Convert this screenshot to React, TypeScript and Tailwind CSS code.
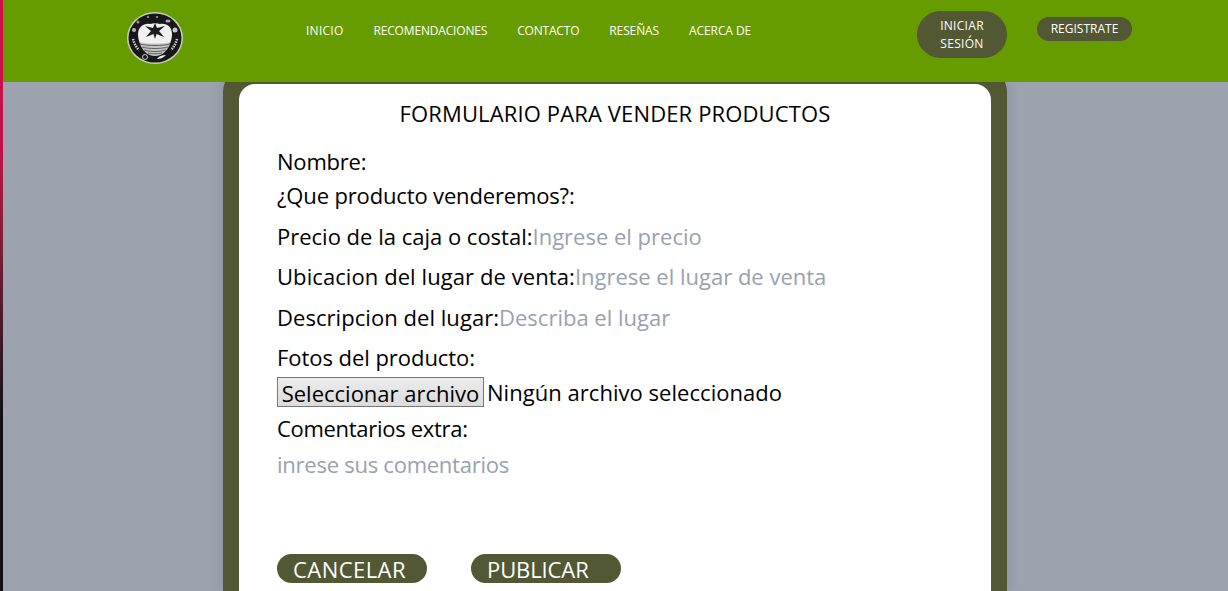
// Formulario para vender productos
function Logo() {
  return (
    <svg viewBox="0 0 56 52" className="h-[52px] w-[56px] shrink-0">
      <ellipse cx="28" cy="26" rx="28" ry="26" fill="#c9cec0" />
      <ellipse cx="28" cy="26" rx="26.5" ry="24.5" fill="#17171a" />
      <path d="M11 22c0-7 6-11 12-10 3-1 7-1 10 0 7-1 12 3 12 10 0 10-7 21-17 21S11 32 11 22z" fill="#f0f0f0" />
      <path d="M12.5 30c6 2 25 2 31 0-2 8-8 14-15.500 14S14.500 38 12.500 30z" fill="#c4c4c4" />
      <path d="M13 32c7 2 23 2 30 0M15 35c6 2 20 2 26 0M17 38c6 2 16 2 22 0M21 41c4 1 10 1 14 0" stroke="#444" strokeWidth="0.8" fill="none" />
      <path d="M28 11L30 16L38 14L32 19L37 25L29.500 22L28 27L26.500 22L19 25L24 19L18 14L26 16Z" fill="#1c1c1c" />
      <g fill="none" stroke="#cfcfcf" strokeWidth="2.500" strokeDasharray="1.500 1">
        <path d="M6 27c1 4 3 8 6 11" />
        <path d="M50 27c-1 4-3 8-6 11" />
      </g>
      <circle cx="7" cy="18" r="2" fill="#b5b5b5" />
      <circle cx="48" cy="18" r="2.500" fill="#c5c5c5" />
      <circle cx="18" cy="45" r="2.500" fill="none" stroke="#ccc" />
      <path d="M30 47c3 0 6-1 9-4-4 0-7 1-9 4z" fill="#eee" />
      <circle cx="11" cy="10" r="1.500" fill="#999" />
      <circle cx="21" cy="5" r="1" fill="#aaa" />
      <circle cx="30" cy="5" r="1" fill="#aaa" />
      <ellipse cx="41" cy="9" rx="2.500" ry="1.500" fill="#aaa" />
    </svg>
  );
}

const navLinks = [
  { label: "INICIO", className: "tracking-[0.25px]" },
  { label: "RECOMENDACIONES", className: "tracking-[-0.17px]" },
  { label: "CONTACTO", className: "tracking-[-0.2px]" },
  { label: "RESEÑAS", className: "tracking-[-0.1px]" },
  { label: "ACERCA DE", className: "tracking-[-0.1px]" },
];

function Header() {
  return (
    <header className="relative z-10 flex h-[82px] shrink-0 bg-[#669c00] text-white">
      <div className="ml-[124px] mt-[12px]">
        <Logo />
      </div>
      <nav className="ml-[123px] mt-[22px] flex h-[18px] gap-[30px] text-[12px] leading-[18px]">
        {navLinks.map((link) => (
          <a key={link.label} href="#" className={link.className}>
            {link.label}
          </a>
        ))}
      </nav>
      <div className="ml-auto mr-[96px] mt-[11px] flex items-start gap-[30px] text-center text-[12px] leading-[18px]">
        <button className="h-[47px] w-[90px] rounded-full bg-[#525833] px-4 tracking-[0.3px]">
          INICIAR SESIÓN
        </button>
        <button className="mt-[6px] h-[24px] w-[95px] rounded-full bg-[#525833]">
          REGISTRATE
        </button>
      </div>
    </header>
  );
}

function Field({
  label,
  placeholder,
  className,
}: {
  label: string;
  placeholder: string;
  className?: string;
}) {
  return (
    <div className="flex h-[40.5px] items-center">
      <label className={`shrink-0 ${className ?? ""}`}>{label}</label>
      <input
        placeholder={placeholder}
        className="min-w-0 flex-1 outline-none placeholder:text-gray-400"
      />
    </div>
  );
}

function SellForm() {
  return (
    <div className="ml-[220px] -mt-[14px] w-[784px] flex-1 rounded-t-[24px] bg-[#525833] px-4 pt-[16px] shadow-[0_0_14px_rgba(0,0,0,0.12)]">
      <form className="h-full rounded-t-[16px] bg-white px-[38px] pt-[14px] text-[22px] text-black">
        <h1 className="text-center text-[22px] leading-[30px] tracking-[0.13px]">
          FORMULARIO PARA VENDER PRODUCTOS
        </h1>
        <div className="mt-[18px] h-[34px] leading-[30px] tracking-[-0.2px]">Nombre:</div>
        <div className="h-[30px] leading-[30px] tracking-[-0.15px]">¿Que producto venderemos?:</div>
        <div className="mt-[6px]">
          <Field label="Precio de la caja o costal:" placeholder="Ingrese el precio" />
          <Field
            label="Ubicacion del lugar de venta:"
            placeholder="Ingrese el lugar de venta"
            className="tracking-[0.08px]"
          />
          <Field
            label="Descripcion del lugar:"
            placeholder="Describa el lugar"
            className="tracking-[0.05px]"
          />
        </div>
        <div className="h-[37px] leading-[38px] tracking-[-0.05px]">Fotos del producto:</div>
        <div className="mt-[2px] flex h-[30px] items-center gap-[3px]">
          <button
            type="button"
            className="h-[30px] w-[207px] border border-[#767676] bg-gradient-to-b from-[#ececec] to-[#dcdcdc] pt-[2px] leading-none"
          >
            Seleccionar archivo
          </button>
          <span className="pt-[2px] tracking-[0.04px]">Ningún archivo seleccionado</span>
        </div>
        <div className="mt-[6px] leading-[30px] tracking-[-0.3px]">Comentarios extra:</div>
        <textarea
          placeholder="inrese sus comentarios"
          className="mt-[5px] block h-[70px] w-full resize-none tracking-[-0.25px] outline-none placeholder:text-gray-400"
        />
        <div className="mt-[36px] flex gap-[44px] text-white">
          <button type="button" className="h-[29px] w-[150px] rounded-full bg-[#525833] pl-4 text-left leading-[30px] tracking-[0.45px]">
            CANCELAR
          </button>
          <button type="button" className="h-[29px] w-[150px] rounded-full bg-[#525833] pl-4 text-left leading-[30px] tracking-[-0.1px]">
            PUBLICAR
          </button>
        </div>
      </form>
    </div>
  );
}

export default function App() {
  return (
    <div className="flex h-[591px] w-[1228px] overflow-hidden bg-[#9ca3af] font-['Open_Sans',sans-serif]">
      <div className="w-[3px] shrink-0 bg-gradient-to-b from-[#d0104a] via-[#c0104a] via-25% to-[#14101a] to-70%" />
      <div className="flex min-w-0 flex-1 flex-col">
        <Header />
        <SellForm />
      </div>
    </div>
  );
}
